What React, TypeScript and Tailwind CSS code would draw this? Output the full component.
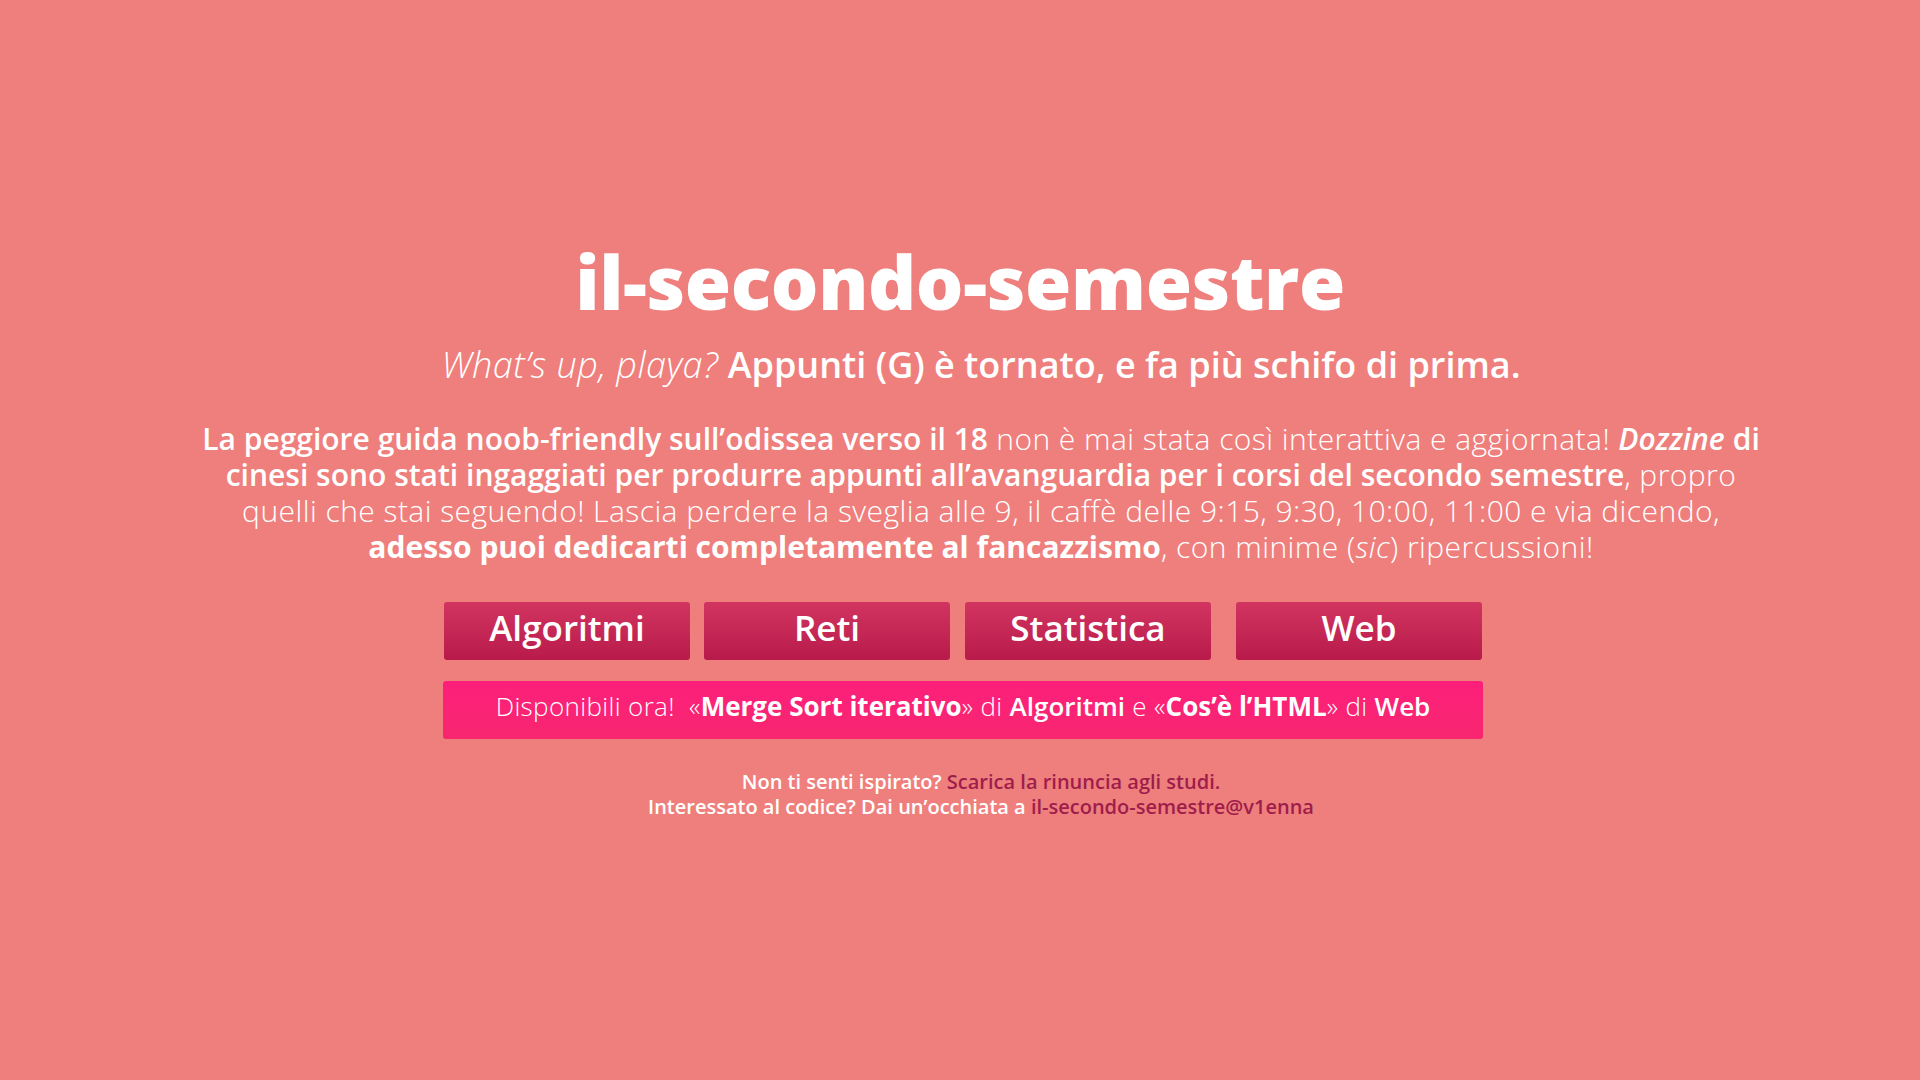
export default function App() {
  return (
    <div
      className="min-h-screen w-full pb-[17px] bg-[#ef7f7d] text-white flex flex-col items-center justify-center"
      style={{ fontFamily: '"Open Sans", "Noto Sans", sans-serif' }}
    >
      <h1 className="text-[75px] leading-none font-extrabold tracking-[-0.4px]">il-secondo-semestre</h1>

      <p className="ml-[42px] mt-[23px] text-[36px] leading-tight">
        <em className="font-light tracking-[0.5px]">What’s up, playa?</em>{" "}
        <span className="font-semibold">Appunti (G) è tornato, e fa più schifo di prima.</span>
      </p>

      <p className="ml-[42px] mt-[34px] max-w-[1572px] text-center text-[30px] leading-[36px] font-light tracking-[0.45px]">
        <strong className="font-semibold tracking-normal">La peggiore guida noob-friendly sull’odissea verso il 18</strong> non è mai
        stata così interattiva e aggiornata! <strong className="font-semibold italic tracking-normal">Dozzine</strong>{" "}
        <strong className="font-semibold tracking-normal">di cinesi sono stati ingaggiati per produrre appunti all’avanguardia per i corsi del secondo semestre</strong>,
        propro quelli che stai seguendo! Lascia perdere la sveglia alle 9, il caffè delle 9:15, 9:30, 10:00, 11:00 e
        via dicendo, <strong className="font-bold tracking-normal">adesso puoi dedicarti completamente al fancazzismo</strong>, con
        minime (<em>sic</em>) ripercussioni!
      </p>

      <nav className="ml-[6px] mt-[37px] flex">
        <a className="w-[246px] h-[58px] pb-[6px] flex items-center justify-center rounded-[3px] bg-gradient-to-b from-[#d23460] to-[#b81a4b] text-[35px] font-semibold">
          Algoritmi
        </a>
        <a className="ml-[14px] w-[246px] h-[58px] pb-[6px] flex items-center justify-center rounded-[3px] bg-gradient-to-b from-[#d23460] to-[#b81a4b] text-[35px] font-semibold">
          Reti
        </a>
        <a className="ml-[15px] w-[246px] h-[58px] pb-[6px] flex items-center justify-center rounded-[3px] bg-gradient-to-b from-[#d23460] to-[#b81a4b] text-[35px] font-semibold">
          Statistica
        </a>
        <a className="ml-[25px] w-[246px] h-[58px] pb-[6px] flex items-center justify-center rounded-[3px] bg-gradient-to-b from-[#d23460] to-[#b81a4b] text-[35px] font-semibold">
          Web
        </a>
      </nav>

      <div className="ml-[6px] mt-[21px] w-[1040px] h-[58px] pb-[8px] flex items-center justify-center rounded-[3px] bg-gradient-to-b from-[#fd1f7b] to-[#f7266f] text-[26px] font-light tracking-[0.35px]">
        <span>
          Disponibili ora!&nbsp; «<b className="font-bold tracking-normal">Merge Sort iterativo</b>» di{" "}
          <b className="font-semibold tracking-normal">Algoritmi</b> e «<b className="font-bold tracking-normal">Cos’è l’HTML</b>» di{" "}
          <b className="font-semibold tracking-normal">Web</b>
        </span>
      </div>

      <footer className="ml-[42px] mt-[30px] text-center text-[20px] leading-[25px] font-semibold">
        <p>
          Non ti senti ispirato? <a className="text-[#9e1d4b]">Scarica la rinuncia agli studi.</a>
        </p>
        <p>
          Interessato al codice? Dai un’occhiata a <a className="text-[#9e1d4b]">il-secondo-semestre@v1enna</a>
        </p>
      </footer>
    </div>
  );
}
